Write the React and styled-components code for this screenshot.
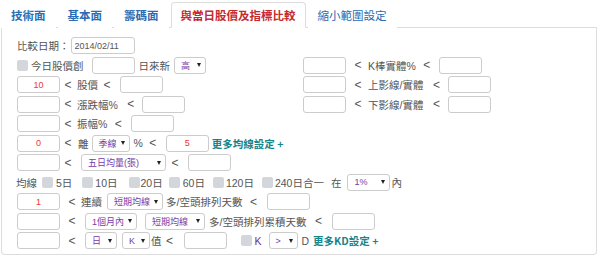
import React from 'react';
import styled, { createGlobalStyle } from 'styled-components';

const GlobalStyle = createGlobalStyle`
  body {
    margin: 0;
    background: #fff;
    font-family: "Liberation Sans", "Noto Sans CJK TC", sans-serif;
  }
`;

const Page = styled.div`
  width: 600px;
  height: 259px;
  box-sizing: border-box;
  padding: 2px 3px 0 1px;
`;

const TabBar = styled.div`
  display: flex;
  align-items: flex-end;
  height: 25px;
  border-bottom: 1px solid #ddd;
`;

const Tab = styled.div`
  display: flex;
  align-items: center;
  height: 26px;
  box-sizing: border-box;
  margin: 0 2px -1px 0;
  padding: 0 9px 1px;
  font-family: "Noto Sans CJK TC", sans-serif;
  font-size: 11.5px;
  font-weight: ${p => (p.$light ? 400 : 700)};
  color: ${p => (p.$active ? '#c42a30' : '#2b6cb3')};
  background: #fff;
  border: 1px solid ${p => (p.$active ? '#ddd' : 'transparent')};
  border-bottom-color: ${p => (p.$active ? '#fff' : 'transparent')};
  border-radius: 4px 4px 0 0;
`;

const Panel = styled.div`
  width: 596px;
  height: 227px;
  box-sizing: border-box;
  padding: 9px 0 0 15px;
  border: 1px solid #ddd;
  border-top: 0;
  border-radius: 0 0 4px 4px;
`;

const Stack = styled.div`
  display: flex;
  flex-direction: column;
  gap: 2.5px;
`;

const TwoCol = styled.div`
  display: grid;
  grid-template-columns: 286px 1fr;
`;

const Row = styled.div`
  display: flex;
  align-items: center;
  height: 17px;
  white-space: nowrap;
`;

const Txt = styled.span`
  margin-left: ${p => p.$ml || 0}px;
  font-size: 10.5px;
  color: ${p => p.$color || '#555'};
`;

const Lt = styled.span`
  display: inline-block;
  width: 8px;
  margin-left: ${p => p.$ml || 0}px;
  text-align: center;
  font-size: 12px;
  color: #555;
  &::before { content: '<'; }
`;

const Field = styled.input`
  width: ${p => p.$w || 43}px;
  height: 17px;
  box-sizing: border-box;
  margin: 0 0 0 ${p => p.$ml || 0}px;
  padding: 0 ${p => (p.$left ? '0 0 3px' : '0')};
  border: 1px solid #ccc;
  border-radius: 3px;
  background: #fff;
  font-family: "Liberation Sans", sans-serif;
  font-size: 9px;
  text-align: ${p => (p.$left ? 'left' : 'center')};
  color: ${p => (p.$left ? '#555' : '#ee3535')};
  outline: none;
`;

const Sel = styled.span`
  display: inline-flex;
  align-items: center;
  justify-content: space-between;
  width: ${p => p.$w}px;
  height: 17px;
  box-sizing: border-box;
  margin-left: ${p => p.$ml || 0}px;
  padding: 0 4px 0 6px;
  border: 1px solid #ccc;
  border-radius: 3px;
  font-size: 9px;
  color: #7a3aa8;
`;

const Caret = styled.i`
  width: 0;
  height: 0;
  border-left: 2.5px solid transparent;
  border-right: 2.5px solid transparent;
  border-top: 4px solid #222;
`;

const Chk = styled.span`
  display: inline-block;
  width: 11px;
  height: 11px;
  margin-left: ${p => p.$ml || 0}px;
  background: #d3d7db;
  border-radius: 2px;
`;

const More = styled.span`
  margin-left: ${p => p.$ml || 0}px;
  font-family: "Noto Sans CJK TC", sans-serif;
  font-size: 10.5px;
  font-weight: 700;
  color: #17868a;
`;

const Select = ({ w, ml, children }) => (
  <Sel $w={w} $ml={ml}>
    <span>{children}</span>
    <Caret />
  </Sel>
);

const Num = ({ v = '', ...rest }) => <Field readOnly value={v} {...rest} />;

const maLines = [
  { label: '5日', ml: 5, tl: 3 },
  { label: '10日', ml: 10, tl: 2 },
  { label: '20日', ml: 11, tl: 1 },
  { label: '60日', ml: 6, tl: 3 },
  { label: '120日', ml: 8, tl: 2 },
  { label: '240日合一', ml: 8, tl: 2 },
];

const rightRows = [
  { label: 'K棒實體%', lt: 7, f: 8 },
  { label: '上影線/實體', lt: 9, f: 8 },
  { label: '下影線/實體', lt: 9, f: 8 },
];

const tabs = ['技術面', '基本面', '籌碼面', '與當日股價及指標比較', '縮小範圍設定'];

export default function App() {
  return (
    <Page>
      <GlobalStyle />
      <TabBar>
        {tabs.map((t, i) => (
          <Tab key={t} $active={i === 3} $light={i === 4}>{t}</Tab>
        ))}
      </TabBar>
      <Panel>
        <Stack>
          <Row>
            <Txt>比較日期：</Txt>
            <Num $left $w={64} $ml={1} v="2014/02/11" />
          </Row>
          <TwoCol>
            <Stack>
              <Row>
                <Chk />
                <Txt $ml={3}>今日股價創</Txt>
                <Num $ml={8} />
                <Txt $ml={4}>日來新</Txt>
                <Select w={32} ml={4}>高</Select>
              </Row>
              <Row>
                <Num v="10" />
                <Lt $ml={4} />
                <Txt $ml={5}>股價</Txt>
                <Lt $ml={5} />
                <Num $ml={9} />
              </Row>
              <Row>
                <Num />
                <Lt $ml={4} />
                <Txt $ml={5}>漲跌幅%</Txt>
                <Lt $ml={9} />
                <Num $ml={7} />
              </Row>
              <Row>
                <Num />
                <Lt $ml={4} />
                <Txt $ml={5}>振幅%</Txt>
                <Lt $ml={7} />
                <Num $ml={9} />
              </Row>
            </Stack>
            <Stack>
              {rightRows.map(r => (
                <Row key={r.label}>
                  <Num />
                  <Lt $ml={8} />
                  <Txt $ml={6}>{r.label}</Txt>
                  <Lt $ml={r.lt} />
                  <Num $ml={r.f} />
                </Row>
              ))}
            </Stack>
          </TwoCol>
          <Row>
            <Num v="0" />
            <Lt $ml={4} />
            <Txt $ml={6}>離</Txt>
            <Select w={38} ml={3}>季線</Select>
            <Txt $ml={4}>%</Txt>
            <Lt $ml={6} />
            <Num $ml={9} v="5" />
            <More $ml={3}>更多均線設定 +</More>
          </Row>
          <Row>
            <Num />
            <Lt $ml={4} />
            <Select w={85} ml={9}>五日均量(張)</Select>
            <Lt $ml={5} />
            <Num $ml={9} />
          </Row>
          <Row>
            <Txt $ml={-1}>均線</Txt>
            {maLines.map(m => (
              <React.Fragment key={m.label}>
                <Chk $ml={m.ml} />
                <Txt $ml={m.tl}>{m.label}</Txt>
              </React.Fragment>
            ))}
            <Txt $ml={7}>在</Txt>
            <Select w={43} ml={6}>1%</Select>
            <Txt $ml={1}>內</Txt>
          </Row>
          <Row>
            <Num v="1" />
            <Lt $ml={8} />
            <Txt $ml={5}>連續</Txt>
            <Select w={56} ml={5}>短期均線</Select>
            <Txt $ml={3}>多/空頭排列天數</Txt>
            <Lt $ml={7} />
            <Num $ml={10} />
          </Row>
          <Row>
            <Num />
            <Lt $ml={8} />
            <Select w={52} ml={9}>1個月內</Select>
            <Select w={60} ml={8}>短期均線</Select>
            <Txt $ml={4}>多/空頭排列累積天數</Txt>
            <Lt $ml={8} />
            <Num $ml={10} />
          </Row>
          <Row>
            <Num />
            <Lt $ml={8} />
            <Select w={32} ml={9}>日</Select>
            <Select w={28} ml={5}>K</Select>
            <Txt $ml={1}>值</Txt>
            <Lt $ml={4} />
            <Num $ml={10} />
            <Chk $ml={14} />
            <Txt $ml={3} $color="#6b2f93">K</Txt>
            <Select w={29} ml={7}>&gt;</Select>
            <Txt $ml={4}>D</Txt>
            <More $ml={4}>更多KD設定 +</More>
          </Row>
        </Stack>
      </Panel>
    </Page>
  );
}
